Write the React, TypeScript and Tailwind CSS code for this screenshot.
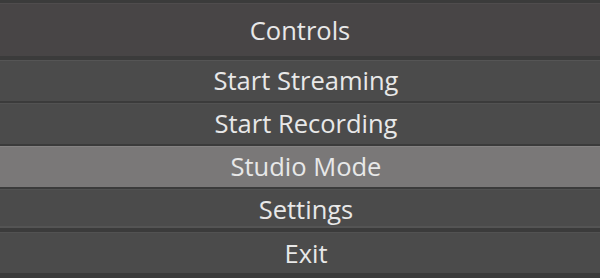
import React from "react";

const items = [
  { label: "Start Streaming", cls: "mt-[4px] h-[41px] border-t border-[#555555] bg-[#4b4b4b]" },
  { label: "Start Recording", cls: "mt-[2px] h-[41px] border-t border-[#525252] bg-[#4b4b4b]" },
  { label: "Studio Mode", cls: "mt-[2px] h-[41px] border-t border-[#858383] bg-[#7a7878]" },
  { label: "Settings", cls: "mt-[2px] h-[39px] pt-[4px] border-t border-b-2 border-t-[#525252] border-b-[#545454] bg-[#4b4b4b]" },
  { label: "Exit", cls: "mt-[4px] h-[41px] pt-[1px] border-t border-[#525252] bg-[#4b4b4b]" },
];

export default function App() {
  return (
    <div className="flex h-[278px] w-[600px] flex-col overflow-hidden bg-[#3b3b3b] font-['Open_Sans',sans-serif] text-[#e8e8e8]">
      <div className="mt-[3px] flex h-[53px] items-center justify-center border-t border-[#4f4c4d] bg-[#484546] text-[25.5px]">Controls</div>
      {items.map((it) => (
        <button key={it.label} className={`flex items-center justify-center pl-[12px] text-[25.5px] leading-none ${it.cls}`}>
          {it.label}
        </button>
      ))}
    </div>
  );
}
